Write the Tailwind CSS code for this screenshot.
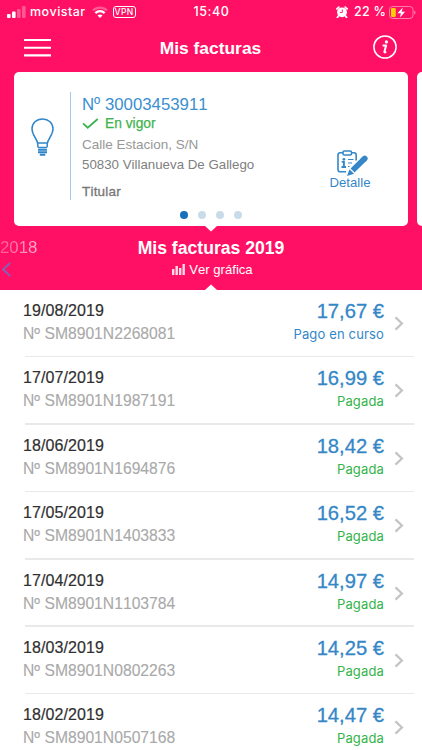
<!DOCTYPE html>
<html lang="es">
  <head>
    <meta charset="UTF-8" />
    <meta name="viewport" content="width=device-width, initial-scale=1.0" />
    <title>Mis facturas</title>
    <script src="https://cdn.jsdelivr.net/npm/@tailwindcss/browser@4"></script>
  </head>
  <body class="h-[750px] overflow-hidden bg-white font-['Liberation_Sans',sans-serif] [font-kerning:none]">
    <!-- HEADER START -->
    <header class="h-[290px] bg-[#ff1064] text-white relative overflow-hidden">
      <!-- STATUS BAR -->
      <div class="h-6 pl-[7px] pr-[6px] grid grid-cols-[1fr_auto_1fr] items-center font-[Inter,sans-serif] font-medium text-[12.5px] leading-6">
        <div class="flex items-center">
          <svg class="w-[19px] h-3 mr-1" viewBox="0 0 19 12" fill="#fff">
            <rect x="0" y="8" width="3.6" height="4" rx="1" />
            <rect x="5" y="5.5" width="3.6" height="6.5" rx="1" />
            <rect x="10" y="3" width="3.6" height="9" rx="1" opacity=".3" />
            <rect x="15" y="0" width="3.6" height="12" rx="1" opacity=".3" />
          </svg>
          <span class="tracking-[0.45px]">movistar</span>
          <svg class="w-4 h-3 ml-1.5 mr-[5px]" viewBox="0 0 16 12" fill="none" stroke="#fff" stroke-width="2.2">
            <path d="M1 4.5a10 10 0 0 1 14 0" opacity=".3" />
            <path d="M3.4 7.1a6.5 6.5 0 0 1 9.2 0" />
            <path d="M8 12 5.5 9.6a3.6 3.6 0 0 1 5 0z" fill="#fff" stroke="none" />
          </svg>
          <span class="w-[23px] h-3 border border-white rounded-[3px] text-[8.5px] leading-[10px] text-center tracking-[0.4px]">VPN</span>
        </div>
        <div class="tracking-[0.6px]">15:40</div>
        <div class="flex items-center justify-end">
          <svg class="w-3 h-3 mr-1.5" viewBox="0 0 12 12" fill="#fff">
            <circle cx="6" cy="6.3" r="4.9" />
            <path d="M.9 2.8 2.800 1.100M11.100 2.800 9.200 1.100M2.500 10 1.400 11.300M9.500 10l1.100 1.300" stroke="#fff" stroke-width="1.800" stroke-linecap="round" />
            <path d="M6.3 3.5v3H3.8" fill="none" stroke="#ff1064" stroke-width=".9" />
          </svg>
          <span class="tracking-[0.2px] mr-[3px]">22 %</span>
          <svg class="w-[27px] h-[13px]" viewBox="0 0 27 13">
            <rect x=".5" y=".5" width="23.5" height="12" rx="3.2" fill="none" stroke="#fff" stroke-opacity=".45" />
            <rect x="2" y="2" width="4.8" height="9" rx="1.3" fill="#ffcc0a" />
            <path d="M13.8 1.5 8.5 7.2h3.4l-1 4.3 5.2-5.7h-3.4z" fill="#fff" />
            <path d="M25.3 4.5v4q1.2-.5 1.2-2t-1.2-2" fill="#fff" fill-opacity=".5" />
          </svg>
        </div>
      </div>

      <!-- NAV BAR -->
      <div class="h-12 pl-6 pr-[25px] flex items-center justify-between">
        <svg class="w-[27px] h-[18px]" viewBox="0 0 27 18" stroke="#fff" stroke-width="2.1">
          <path d="M0 1h27M0 8.700h27M0 16.400h27" />
        </svg>
        <h1 class="mr-[3px] text-[17.4px] font-bold">Mis facturas</h1>
        <svg class="w-6 h-6 -mt-0.5" viewBox="0 0 24 24">
          <circle cx="12" cy="12" r="11.1" fill="none" stroke="#fff" stroke-width="1.5" />
          <circle cx="13.4" cy="6.9" r="1.6" fill="#fff" />
          <path d="M9.6 10.4h3.5l-1.7 6.400q-.1.8.6.5l1.200-.7" fill="none" stroke="#fff" stroke-width="2" stroke-linejoin="round" />
        </svg>
      </div>

      <!-- CONTRACT CARDS -->
      <div class="flex gap-[9px] pl-[14px] w-[600px]">
        <article class="relative w-[394px] h-[154px] bg-white rounded-[5px] flex shrink-0">
          <div class="w-14 pt-[46px] flex justify-center">
            <svg class="w-[23px] h-[39px]" viewBox="0 0 23 39" fill="none" stroke="#2f86cb" stroke-width="1.500">
              <path d="M6.8 28.2V26C6.2 20.500 1 17.500 1 10.800 1 5 5.500 1 11.500 1S22 5 22 10.800c0 6.700-5.200 9.700-5.800 15.200v2.200q0 1.300-1.400 1.300H8.200q-1.400 0-1.400-1.300z" />
              <path d="M7 25h9.200" />
              <path d="M7 31.700h9M7 34.200h9M8.800 36.800h5.500" stroke-width="2" />
            </svg>
          </div>
          <div class="mt-5 h-[108px] border-l border-[#a5c9e8] pl-[11px] flex-1 text-[#8d8d8d]">
            <h2 class="mt-[3px] text-[16.8px] leading-5 text-[#3a8fcf]">Nº 30003453911</h2>
            <p class="flex items-center text-[13.8px] leading-[17px] text-[#3fb34f] [-webkit-text-stroke:0.25px]">
              <svg class="w-[17px] h-[11px] mr-1.5" viewBox="0 0 17 11" fill="none" stroke="#3fb34f" stroke-width="1.8">
                <path d="M1 5.300 5.700 9.700 15.700 1" />
              </svg>
              En vigor
            </p>
            <p class="mt-[3px] text-[13.5px] leading-5 text-[#979797]">Calle Estacion, S/N</p>
            <p class="text-[13.3px] leading-5 text-[#808080]">50830 Villanueva De Gallego</p>
            <p class="mt-[7px] text-[13.5px] leading-5 tracking-[0.2px] text-[#777] [-webkit-text-stroke:0.3px]">Titular</p>
          </div>
          <div class="w-[58px] mr-[29px] pt-[78px] flex flex-col items-center text-[#3587c9]">
            <svg class="w-[31px] h-[26px] ml-1" viewBox="0 0 31 26" fill="none" stroke="currentColor" stroke-width="1.600">
              <path d="M6 2.700H3.200Q1 2.700 1 5v14.500q0 2.300 2.200 2.300H9M14.500 2.700h2.500q2.200 0 2.200 2.300v5.500" />
              <rect x="6" y="1" width="8.500" height="4" rx="1.300" />
              <circle cx="6.900" cy="9.300" r="1.400" fill="currentColor" stroke="none" />
              <path d="M4.700 11.900h2.200v5M4.500 17h4.500" stroke-width="1.900" />
              <path d="M11 9.500h5.500M11 13h4M11 16.500h1.500" stroke-width="1.200" />
              <path d="m15.500 20.500 12.200-12" stroke-width="5.600" />
              <path d="m26.700 9.500 1.100-1.100" stroke-width="5.600" stroke-linecap="round" />
              <path d="m12.500 19.300 4.500 4.500-7 2.200z" fill="currentColor" stroke="none" />
              <path d="m12.800 18.500 4.700 4.700" stroke="#fff" stroke-width=".7" />
            </svg>
            <span class="text-[13.2px] leading-[14px]">Detalle</span>
          </div>
          <!-- pager dots -->
          <div class="absolute bottom-[7px] left-[166px] flex gap-[10px]">
            <span class="w-2 h-2 rounded-full bg-[#1670bd]"></span>
            <span class="w-2 h-2 rounded-full bg-[#cadbe8]"></span>
            <span class="w-2 h-2 rounded-full bg-[#cadbe8]"></span>
            <span class="w-2 h-2 rounded-full bg-[#cadbe8]"></span>
          </div>
          <svg class="absolute top-full left-[191px] w-3 h-[6px]" viewBox="0 0 12 6" fill="#fff"><path d="M0 0h12L6 5.500z" /></svg>
        </article>
        <article class="w-40 h-[154px] bg-white rounded-[5px] shrink-0"></article>
      </div>

      <!-- YEAR SELECTOR -->
      <div class="h-16 pt-[11px] grid grid-cols-[1fr_auto_1fr]">
        <div>
          <div class="w-10 text-[16.8px] leading-[22px] bg-linear-to-r from-white/30 to-white/70 bg-clip-text text-transparent">2018</div>
          <svg class="w-[9px] h-[15px] mt-[3px] ml-[2px]" viewBox="0 0 9 15" fill="none" stroke="#7a66bb" stroke-width="1.700">
            <path d="M8.300.800 1 7.500l7.300 6.700" />
          </svg>
        </div>
        <div class="text-center">
          <h2 class="text-[17.6px] leading-[22px] font-bold">Mis facturas 2019</h2>
          <div class="mt-px ml-[3px] flex items-center justify-center text-[13.1px] leading-5">
            <svg class="w-[13px] h-[11px] mr-1 -mt-0.5" viewBox="0 0 13 11" fill="#fff" fill-opacity=".85">
              <path d="M0 5h2.400v6H0zM3.500 2h2.400v9H3.500zM7 4h2.400v7H7zM10.500 0h2.400v11h-2.400z" />
            </svg>
            Ver gráfica
          </div>
        </div>
      </div>
      <svg class="absolute bottom-0 left-[205px] w-3 h-[6px]" viewBox="0 0 12 6" fill="#fff"><path d="M0 6h12L6 .500z" /></svg>
    </header>
    <!-- END HEADER -->

    <!-- INVOICE LIST -->
    <main id="invoice-list"></main>

    <script>
      const invoices = [
        ["19/08/2019", "SM8901N2268081", "17,67", "Pago en curso"],
        ["17/07/2019", "SM8901N1987191", "16,99", "Pagada"],
        ["18/06/2019", "SM8901N1694876", "18,42", "Pagada"],
        ["17/05/2019", "SM8901N1403833", "16,52", "Pagada"],
        ["17/04/2019", "SM8901N1103784", "14,97", "Pagada"],
        ["18/03/2019", "SM8901N0802263", "14,25", "Pagada"],
        ["18/02/2019", "SM8901N0507168", "14,47", "Pagada"],
      ];

      document.getElementById("invoice-list").innerHTML = invoices
        .map(
          ([date, number, amount, status]) => `
        <div class="h-[67.4px] pl-[23px] pr-[17px] flex flex-col justify-between">
          <div class="pt-[9px] flex">
            <div class="flex-1">
              <div class="text-[16px] leading-6 tracking-[0.1px] text-[#303030] [-webkit-text-stroke:0.2px]">${date}</div>
              <div class="text-[15.7px] leading-[22px] text-[#a9a9a9] [-webkit-text-stroke:0.1px]">Nº ${number}</div>
            </div>
            <div class="text-right">
              <div class="text-[20.2px] leading-6 text-[#3487c7] [-webkit-text-stroke:0.3px]">${amount} €</div>
              <div class="font-[Inter,sans-serif] text-[13px] leading-[23px] tracking-[0.15px] ${
                status === "Pagada" ? "text-[#32b44a]" : "text-[#3487c7]"
              }">${status}</div>
            </div>
            <svg class="w-[11px] h-[15px] mt-[17px] ml-[10px]" viewBox="0 0 11 15" fill="none" stroke="#c4c4c4" stroke-width="2.300">
              <path d="m1.500 1.300 6.400 6.200-6.400 6.200" />
            </svg>
          </div>
          <div class="h-[1.5px] ml-[2px] -mr-[9px] bg-[#e9e9e9]"></div>
        </div>`
        )
        .join("");
    </script>
  </body>
</html>
